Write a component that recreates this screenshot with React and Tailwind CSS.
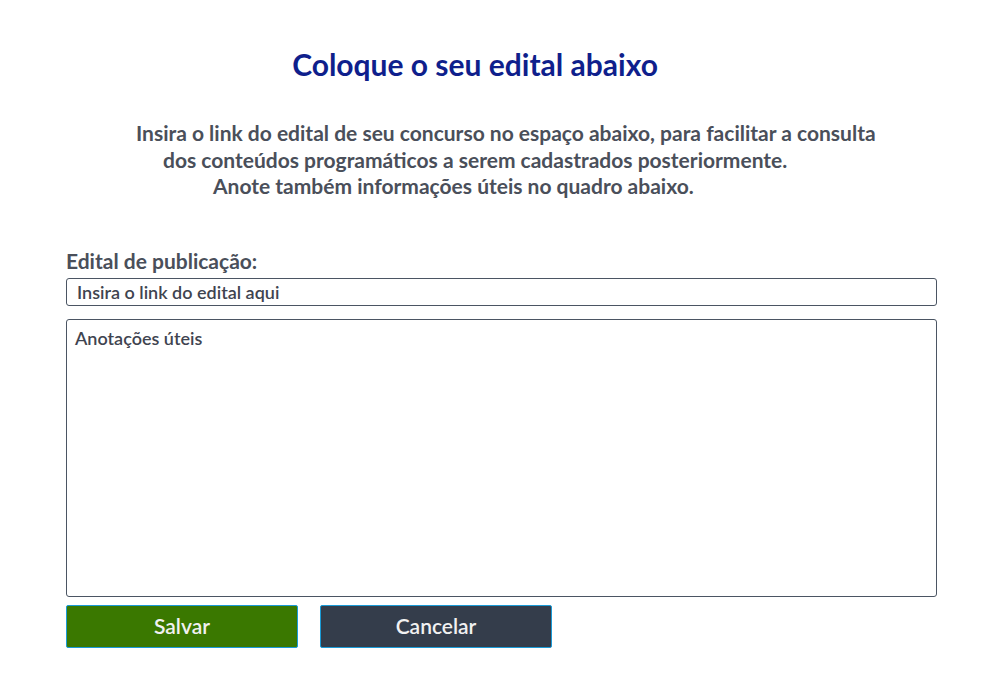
export default function App() {
  return (
    <div className="min-h-[685px] bg-white font-['Lato',sans-serif] text-[#4a4f5a]">
      {/* Heading */}
      <h1 className="pt-[44px] pr-[38px] text-center text-[30px] font-bold leading-[40px] text-[#0f1f8c]">
        Coloque o seu edital abaixo
      </h1>

      {/* Intro text */}
      <div className="mt-[36px] text-[21px] font-bold leading-[26.5px] whitespace-nowrap">
        <p className="pl-[136px]">
          Insira o link do edital de seu concurso no espaço abaixo, para facilitar a consulta
        </p>
        <p className="pl-[163px]">dos conteúdos programáticos a serem cadastrados posteriormente.</p>
        <p className="pl-[213px]">Anote também informações úteis no quadro abaixo.</p>
      </div>

      {/* Form */}
      <div className="mt-[48px] pl-[66px] pr-[51px]">
        <label className="block text-[21px] font-bold leading-[26px]">Edital de publicação:</label>
        <input
          type="text"
          placeholder="Insira o link do edital aqui"
          className="mt-[4px] block h-[28px] w-full rounded-[3px] border border-[#4b5563] px-[10px] text-[18px] font-semibold text-[#3f4450] placeholder:text-[#3f4450] outline-none"
        />
        <textarea
          placeholder="Anotações úteis"
          className="mt-[13px] block h-[278px] w-full resize-none rounded-[3px] border border-[#4b5563] px-[8px] py-[6px] text-[18px] font-semibold leading-[24px] text-[#3f4450] placeholder:text-[#3f4450] outline-none"
        />
        <div className="mt-[8px] flex gap-[22px]">
          <button className="h-[43px] w-[232px] rounded-[2px] border border-[#1a9bd7] bg-[#3a7800] text-[21px] font-semibold text-[#f1f1f1]">
            Salvar
          </button>
          <button className="h-[43px] w-[232px] rounded-[2px] border border-[#1a9bd7] bg-[#343d4b] text-[21px] font-semibold text-[#f1f1f1]">
            Cancelar
          </button>
        </div>
      </div>
    </div>
  )
}
